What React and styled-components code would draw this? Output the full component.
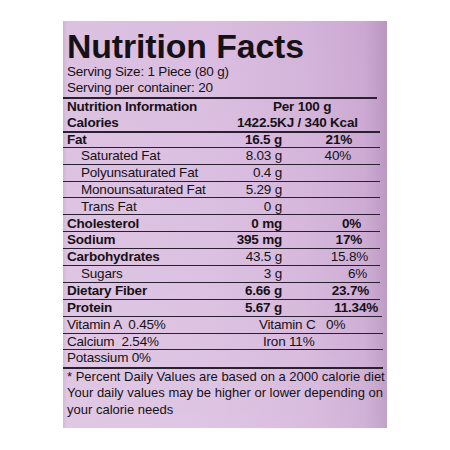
import React from "react";
import styled, { createGlobalStyle } from "styled-components";

const Global = createGlobalStyle`
  html, body { margin: 0; padding: 0; background: #ffffff; }
  body { font-family: "Liberation Sans", Arial, sans-serif; }
`;

const Page = styled.div`
  width: 450px;
  height: 450px;
  padding: 21px 0 0 63px;
  box-sizing: border-box;
`;

const Panel = styled.div`
  width: 324px;
  height: 407px;
  box-sizing: border-box;
  overflow: hidden;
  color: #161116;
  background:
    linear-gradient(180deg, rgba(255,255,255,0) 0%, rgba(255,255,255,0.06) 60%, rgba(255,255,255,0.12) 100%),
    linear-gradient(90deg, #cdb2d2 0px, #dcc1e1 4px, #dabde0 45%, #d4b4da 75%, #cba8d2 93%, #b995c0 100%);
  padding-top: 8px;
`;

const Title = styled.h1`
  margin: 0;
  padding-left: 4px;
  font-size: 33.8px;
  line-height: 35px;
  font-weight: 700;
  letter-spacing: -0.1px;
`;

const Serving = styled.div`
  width: 314px;
  padding-left: 4px;
  box-sizing: border-box;
  font-size: 13.5px;
  letter-spacing: -0.2px;
  line-height: 16px;
  border-bottom: 2px solid #2a2130;
  padding-bottom: 1px;
`;

const Row = styled.div`
  display: grid;
  grid-template-columns: 151px 64px 1fr;
  align-items: center;
  width: ${(p) => p.$w || 317}px;
  height: ${(p) => p.$h || 16.9}px;
  box-sizing: border-box;
  padding-left: 4px;
  font-size: 13.5px;
  letter-spacing: -0.2px;
  line-height: ${(p) => (p.$h || 16.9) - (p.$bw ?? 1.5)}px;
  border-bottom: ${(p) => p.$bw ?? 1.5}px solid #2a2130;
  white-space: pre;
`;

const Label = styled.span`
  font-weight: ${(p) => (p.$bold ? 700 : 400)};
  padding-left: ${(p) => (p.$indent ? 14 : 0)}px;
`;

const Value = styled.span`
  font-weight: ${(p) => (p.$bold ? 700 : 400)};
  text-align: right;
`;

const Pct = styled.span`
  font-weight: ${(p) => (p.$bold ? 700 : 400)};
  text-align: right;
  padding-right: ${(p) => p.$pr || 0}px;
`;

const Span = styled.span`
  grid-column: 2 / 4;
  font-weight: 700;
  padding-left: ${(p) => p.$pl || 0}px;
`;

const VitRow = styled(Row)`
  grid-template-columns: 192px 1fr;
`;

const Vit = styled.span`
  padding-left: ${(p) => p.$pl || 0}px;
`;

const Foot = styled.div`
  padding-left: 4px;
  font-size: 13px;
  line-height: 16.5px;
  white-space: nowrap;
`;

const nutrients = [
  { label: "Fat", value: "16.5 g", pct: "21%", bold: true, vb: true, pr: 28, h: 15.25 },
  { label: "Saturated Fat", value: "8.03 g", pct: "40%", indent: true, pr: 29 },
  { label: "Polyunsaturated Fat", value: "0.4 g", pct: "", indent: true },
  { label: "Monounsaturated Fat", value: "5.29 g", pct: "", indent: true },
  { label: "Trans Fat", value: "0 g", pct: "", indent: true },
  { label: "Cholesterol", value: "0 mg", pct: "0%", bold: true, vb: true, pr: 19 },
  { label: "Sodium", value: "395 mg", pct: "17%", bold: true, vb: true, pr: 18 },
  { label: "Carbohydrates", value: "43.5 g", pct: "15.8%", bold: true, pr: 12 },
  { label: "Sugars", value: "3 g", pct: "6%", indent: true, pr: 13 },
  { label: "Dietary Fiber", value: "6.66 g", pct: "23.7%", bold: true, vb: true, pr: 11 },
  { label: "Protein", value: "5.67 g", pct: "11.34%", bold: true, vb: true, pr: 4, w: 319 },
];

export default function App() {
  return (
    <>
      <Global />
      <Page>
        <Panel>
          <Title>Nutrition Facts</Title>
          <Serving>
            <div>Serving Size: 1 Piece (80 g)</div>
            <div>Serving per container: 20</div>
          </Serving>
          <Row $h={16} $bw={0}>
            <Label $bold>Nutrition Information</Label>
            <Span $pl={55}>Per 100 g</Span>
          </Row>
          <Row $h={17.5} $bw={2.5}>
            <Label $bold>Calories</Label>
            <Span $pl={19}>1422.5KJ / 340 Kcal</Span>
          </Row>
          {nutrients.map((n) => (
            <Row key={n.label} $h={n.h} $w={n.w}>
              <Label $bold={n.bold} $indent={n.indent}>{n.label}</Label>
              <Value $bold={n.vb}>{n.value}</Value>
              <Pct $bold={n.vb} $pr={n.pr}>{n.pct}</Pct>
            </Row>
          ))}
          <VitRow $w={320}>
            <Vit>Vitamin A  0.45%</Vit>
            <Vit>Vitamin C   0%</Vit>
          </VitRow>
          <VitRow $w={320}>
            <Vit>Calcium  2.54%</Vit>
            <Vit $pl={4}>Iron 11%</Vit>
          </VitRow>
          <VitRow $w={320} $h={18.5} $bw={2}>
            <Vit>Potassium 0%</Vit>
          </VitRow>
          <Foot>
            <div>* Percent Daily Values are based on a 2000 calorie diet</div>
            <div>Your daily values may be higher or lower depending on</div>
            <div>your calorie needs</div>
          </Foot>
        </Panel>
      </Page>
    </>
  );
}
